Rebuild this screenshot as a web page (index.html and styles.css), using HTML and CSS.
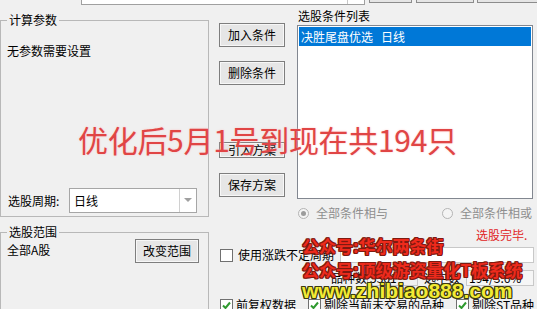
FILE: index.html
```html
<!DOCTYPE html>
<html>
<head>
<meta charset="utf-8">
<link rel="stylesheet" href="styles.css">
</head>
<body>
<div class="app">
  <div class="topbar">
    <div class="top-combo"><span class="top-combo-btn"></span></div>
    <div class="top-btn b1"></div>
    <div class="top-btn b2"></div>
    <div class="top-btn b3"></div>
  </div>
  <div class="main">
    <div class="left">
      <fieldset class="group g1">
        <legend>计算参数</legend>
        <div class="g1-body">
          <div class="note">无参数需要设置</div>
          <div class="period-row">
            <span class="period-label">选股周期:</span>
            <div class="combo">
              <span class="combo-text">日线</span>
              <span class="combo-arrow"><svg width="8" height="5" viewBox="0 0 8 5"><path d="M0 0 H8 L4 4 Z" fill="#a0a0a0"/></svg></span>
            </div>
          </div>
        </div>
      </fieldset>
      <fieldset class="group g2">
        <legend>选股范围</legend>
        <div class="range-row">
          <span class="range-text">全部A股</span>
          <button class="btn range-btn">改变范围</button>
        </div>
      </fieldset>
    </div>
    <div class="right">
      <div class="upper">
        <div class="btn-col">
          <button class="btn">加入条件</button>
          <button class="btn del">删除条件</button>
          <button class="btn import">引入方案</button>
          <button class="btn save">保存方案</button>
        </div>
        <div class="list-col">
          <div class="list-label">选股条件列表</div>
          <div class="listbox">
            <div class="list-item sel"><span>决胜尾盘优选</span><span class="sep"></span><span>日线</span></div>
          </div>
        </div>
      </div>
      <div class="radio-row">
        <div class="radio r1"><span class="radio-dot checked"></span><span>全部条件相与</span></div>
        <div class="radio"><span class="radio-dot"></span><span>全部条件相或</span></div>
      </div>
      <div class="status">选股完毕.</div>
      <div class="cb-row">
        <span class="cbox"></span>
        <span class="cb-label">使用涨跌不定周期</span>
        <span class="field long-field"></span>
      </div>
      <div class="count-row">
        <span>品种数</span>
        <span class="field f-count">5361</span>
        <span class="sel-label">选中数</span>
        <span class="field f-sel">194/3.6%</span>
      </div>
      <div class="opt-row">
        <div class="opt o1"><span class="cbox"><svg width="11" height="11" viewBox="0 0 11 11"><path d="M2 5.5 L4.5 8 L9 2.5" fill="none" stroke="#2f9a2f" stroke-width="2"/></svg></span><span>前复权数据</span></div>
        <div class="opt o2"><span class="cbox"><svg width="11" height="11" viewBox="0 0 11 11"><path d="M2 5.5 L4.5 8 L9 2.5" fill="none" stroke="#2f9a2f" stroke-width="2"/></svg></span><span>剔除当前未交易的品种</span></div>
        <div class="opt o3"><span class="cbox"><svg width="11" height="11" viewBox="0 0 11 11"><path d="M2 5.5 L4.5 8 L9 2.5" fill="none" stroke="#2f9a2f" stroke-width="2"/></svg></span><span>剔除ST品种</span></div>
      </div>
    </div>
  </div>
  <div class="wm wm-big">优化后5月1号到现在共194只</div>
  <div class="wm wm-red wm1">公众号:华尔两条街</div>
  <div class="wm wm-red wm2">公众号:顶级游资量化T板系统</div>
  <div class="wm wm-url">www.zhibiao888.com</div>
</div>
</body>
</html>
```

FILE: styles.css
```css
html, body {
  margin: 0;
  padding: 0;
  background: #f0f0f0;
}
body {
  font-family: "Noto Sans CJK SC", "Microsoft YaHei", sans-serif;
  font-size: 12px;
  line-height: 16px;
  color: #000;
}
.app {
  position: relative;
  width: 537px;
  height: 309px;
  overflow: hidden;
}

/* top strip (cut off) */
.topbar {
  height: 5px;
  display: flex;
  align-items: flex-end;
  padding-left: 81px;
}
.top-combo {
  box-sizing: border-box;
  flex: none;
  width: 284px;
  height: 20px;
  border: 1px solid #a0a0a0;
  background: #fff;
  display: flex;
  justify-content: flex-end;
}
.top-combo-btn {
  width: 16px;
  border-left: 1px solid #c8c8c8;
}
.top-btn {
  box-sizing: border-box;
  flex: none;
  height: 20px;
  margin-bottom: 2px;
  border: 1px solid #8c8c8c;
  background: #e5e5e5;
}
.b1 { margin-left: 4px; width: 43px; }
.b2 { margin-left: 4px; width: 58px; }
.b3 { margin-left: 3px; width: 70px; }

.main {
  display: flex;
}
.left {
  flex: none;
  width: 209px;
}
.group {
  box-sizing: border-box;
  width: 209px;
  margin: 0;
  min-width: 0;
  border: 1px solid #b8b8b8;
}
.group legend {
  padding: 0 2px;
  margin-left: 0;
  font-size: 12px;
  line-height: 16px;
}
.g1 {
  margin-top: 7px;
  padding: 15px 11px 3px 6px;
}
.g1-body {
  height: 170px;
  display: flex;
  flex-direction: column;
  justify-content: space-between;
}
.period-row {
  display: flex;
  align-items: center;
  height: 25px;
}
.period-label {
  width: 62px;
  padding-left: 1px;
  box-sizing: border-box;
}
.combo {
  box-sizing: border-box;
  width: 128px;
  height: 25px;
  border: 1px solid #a6a6a6;
  background: #fff;
  display: flex;
  align-items: center;
}
.combo-text {
  flex: 1;
  padding-left: 4px;
}
.combo-arrow {
  width: 16px;
  height: 23px;
  border-left: 1px solid #d0d0d0;
  display: flex;
  align-items: center;
  justify-content: center;
}
.g2 {
  margin-top: 7px;
  padding: 0 9px 0 6px;
  height: 120px;
}
.range-row {
  margin-top: -1px;
  height: 24px;
  display: flex;
  align-items: center;
  justify-content: space-between;
}
.range-text {
  padding-bottom: 3px;
}

.btn {
  box-sizing: border-box;
  width: 66px;
  height: 24px;
  padding: 0;
  border: 1px solid #7e7e7e;
  background: #e6e6e6;
  box-shadow: inset 0 0 0 1px #f7f7f7;
  font-family: "Noto Sans CJK SC", sans-serif;
  font-size: 12px;
  line-height: 16px;
  color: #000;
}
.range-btn {
  width: 64px;
}

.right {
  flex: 1;
  padding-left: 10px;
  display: flex;
  flex-direction: column;
}
.upper {
  display: flex;
  gap: 12px;
  height: 194px;
}
.btn-col {
  flex: none;
  width: 66px;
  display: flex;
  flex-direction: column;
  padding-top: 18px;
}
.btn-col .del { margin-top: 14px; }
.btn-col .import { margin-top: 57px; height: 16px; line-height: 14px; }
.btn-col .save { margin-top: 15px; }
.list-col {
  width: 236px;
  padding-top: 3px;
}
.list-label {
  height: 17px;
  padding-left: 1px;
}
.listbox {
  box-sizing: border-box;
  height: 174px;
  border: 1px solid #828790;
  background: #fff;
  padding: 1px;
}
.list-item {
  height: 19px;
  line-height: 19px;
  padding-left: 2px;
  display: flex;
}
.list-item .sep {
  width: 8px;
}
.list-item.sel {
  background: #0078d7;
  color: #fff;
}

.radio-row {
  margin-top: 8px;
  height: 12px;
  display: flex;
  align-items: center;
  padding-left: 79px;
  color: #8e8e8e;
}
.radio {
  display: flex;
  align-items: center;
  gap: 7px;
}
.radio.r1 { width: 144px; }
.radio-dot {
  box-sizing: border-box;
  width: 11px;
  height: 11px;
  border: 1px solid #b4b4b4;
  border-radius: 50%;
  background: #f4f4f4;
  display: flex;
  align-items: center;
  justify-content: center;
}
.radio-dot.checked::after {
  content: "";
  width: 5px;
  height: 5px;
  border-radius: 50%;
  background: #9c9c9c;
}

.status {
  margin-top: 8px;
  padding-left: 257px;
  color: #e02424;
}

.cb-row {
  margin-top: 4px;
  height: 16px;
  display: flex;
  align-items: center;
}
.cbox {
  box-sizing: border-box;
  flex: none;
  width: 13px;
  height: 13px;
  margin-left: 1px;
  border: 1px solid #707070;
  background: #fff;
  display: flex;
  align-items: center;
  justify-content: center;
}
.cb-label {
  margin-left: 5px;
}
.field {
  box-sizing: border-box;
  height: 16px;
  border: 1px solid #c8c8c8;
  background: #fff;
  padding-left: 2px;
  line-height: 14px;
}
.long-field {
  margin-left: 6px;
  width: 194px;
}

.count-row {
  margin-top: 7px;
  height: 16px;
  display: flex;
  align-items: center;
  padding-left: 112px;
}
.f-count {
  width: 51px;
  background: #f0f0f0;
}
.sel-label {
  margin-left: 6px;
}
.f-sel {
  margin-left: 6px;
  width: 68px;
  background: #f6f6f6;
}

.opt-row {
  margin-top: 11px;
  display: flex;
  align-items: center;
}
.opt {
  display: flex;
  align-items: center;
  gap: 3px;
}
.opt.o1 { width: 88px; }
.opt.o2 { width: 148px; }

/* watermarks overlaid on the screenshot */
.wm {
  position: absolute;
  white-space: nowrap;
}
.wm-big {
  left: 78px;
  top: 121px;
  font-size: 30px;
  line-height: 36px;
  letter-spacing: -0.3px;
  color: #e04545;
  text-shadow: 0 0 2px rgba(255, 190, 190, 0.9);
}
.wm-red {
  left: 302px;
  font-size: 17px;
  line-height: 17px;
  font-weight: bold;
  color: #ee2a1c;
  text-shadow: 1px 0 0 #7e1a10, -1px 0 0 #7e1a10, 0 1px 0 #7e1a10, 0 -1px 0 #7e1a10,
    1px 1px 0 #7e1a10, -1px -1px 0 #7e1a10, 1px -1px 0 #7e1a10, -1px 1px 0 #7e1a10;
}
.wm1 { top: 237px; }
.wm2 { top: 261px; }
.wm-url {
  left: 302px;
  top: 280px;
  font-family: "Liberation Sans", Arial, sans-serif;
  font-size: 21px;
  line-height: 21px;
  font-weight: bold;
  color: #f2ea34;
  text-shadow: 1px 0 0 #3c3a10, -1px 0 0 #3c3a10, 0 1px 0 #3c3a10, 0 -1px 0 #3c3a10,
    1px 1px 0 #3c3a10, -1px -1px 0 #3c3a10, 1px -1px 0 #3c3a10, -1px 1px 0 #3c3a10;
}
```
